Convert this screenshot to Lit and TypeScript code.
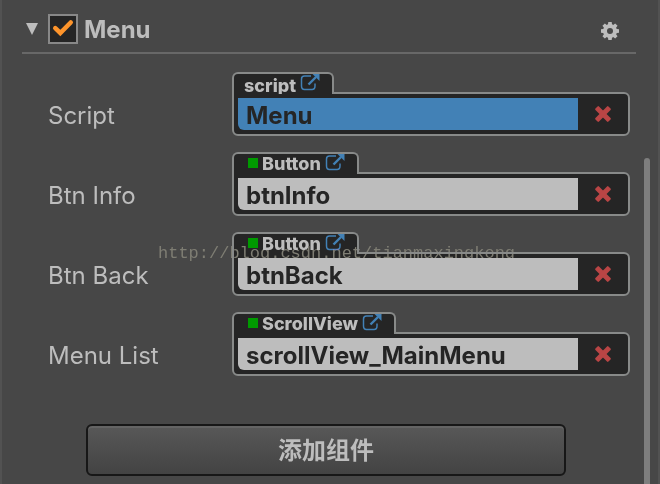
import { LitElement, html, css, svg, nothing } from "lit";
import { customElement, property, state } from "lit/decorators.js";
import { classMap } from "lit/directives/class-map.js";

interface Slot {
  id: string;
  label: string;
  type: string;
  value: string;
  isScript: boolean;
}

const SLOTS: Slot[] = [
  { id: "script", label: "Script", type: "script", value: "Menu", isScript: true },
  { id: "btn-info", label: "Btn Info", type: "Button", value: "btnInfo", isScript: false },
  { id: "btn-back", label: "Btn Back", type: "Button", value: "btnBack", isScript: false },
  { id: "menu-list", label: "Menu List", type: "ScrollView", value: "scrollView_MainMenu", isScript: false },
];

@customElement("node-slot")
export class NodeSlot extends LitElement {
  @property({ attribute: false }) slotData!: Slot;

  static styles = css`
    :host {
      display: block;
    }
    .row {
      display: grid;
      grid-template-columns: 184px minmax(0, 1fr);
      align-items: end;
    }
    .label {
      font-size: 24px;
      line-height: 40px;
      color: #bdbdbd;
    }
    .field {
      display: flex;
      flex-direction: column;
      align-items: flex-start;
    }
    .tab {
      position: relative;
      z-index: 1;
      box-sizing: border-box;
      height: 22px;
      margin-bottom: -2px;
      padding: 0 12px 0 14px;
      display: flex;
      align-items: flex-start;
      gap: 4px;
      overflow: hidden;
      background: #252525;
      border: 2px solid #888a89;
      border-bottom: 0;
      border-radius: 6px 6px 0 0;
      color: #bdbdbd;
      font-size: 18px;
      font-weight: 800;
      line-height: 20px;
      text-decoration: none;
    }
    .tab.script {
      padding-left: 10px;
    }
    .tab.script .type {
      line-height: 24px;
    }
    .dot {
      width: 10px;
      height: 10px;
      margin-top: 4px;
      background: #009a00;
    }
    .open {
      display: block;
      width: 20px;
      height: 18px;
    }
    .box {
      box-sizing: border-box;
      width: 100%;
      height: 44px;
      padding: 4px 0 4px 4px;
      display: flex;
      background: #252525;
      border: 2px solid #888a89;
      border-radius: 0 6px 6px 6px;
    }
    .value {
      flex: 1;
      min-width: 0;
      box-sizing: border-box;
      height: 32px;
      margin: 0;
      padding: 2px 8px 0;
      border: 0;
      outline: 0;
      border-radius: 0 0 0 6px;
      background: #bdbdbd;
      color: #252525;
      font: inherit;
      font-size: 24px;
      font-weight: 700;
    }
    .value.script {
      background: #4281b6;
    }
    .clear {
      width: 50px;
      padding: 0;
      border: 0;
      background: none;
      display: grid;
      place-items: center;
    }
    .cross {
      display: block;
      width: 18px;
      height: 18px;
    }
  `;

  render() {
    const s = this.slotData;
    return html`
      <div class="row">
        <label class="label" for=${s.id}>${s.label}</label>
        <div class="field">
          <a class=${classMap({ tab: true, script: s.isScript })} href="#${s.id}">
            ${s.isScript ? nothing : html`<span class="dot"></span>`}
            <span class="type">${s.type}</span>
            <svg class="open" viewBox="0 0 20 18" fill="none" stroke="#4281b6">
              <path d="M11 2H4.5Q1.5 2 1.5 5V12Q1.5 15.500 4.500 15.500H12Q15 15.500 15 12V9.500" stroke-width="1.500" />
              <path d="M8.500 10.500L16 3" stroke-width="2.400" />
              <path d="M12.500 0H19.500V7Z" fill="#4281b6" stroke="none" />
            </svg>
          </a>
          <div class="box">
            <input
              class=${classMap({ value: true, script: s.isScript })}
              id=${s.id}
              type="text"
              readonly
              .value=${s.value}
            />
            <button class="clear" type="button" aria-label="Clear ${s.label}">
              <svg class="cross" viewBox="0 0 18 18">
                <g fill="#b94545">
                  <rect x="-0.200" y="6.500" width="18.400" height="5" rx="1" transform="rotate(45 9 9)" />
                  <rect x="-0.200" y="6.500" width="18.400" height="5" rx="1" transform="rotate(-45 9 9)" />
                </g>
              </svg>
            </button>
          </div>
        </div>
      </div>
    `;
  }
}

@customElement("app-root")
export class AppRoot extends LitElement {
  @state() private enabled = true;

  static styles = css`
    :host {
      display: block;
      font-family: Inter, "Noto Sans CJK SC", sans-serif;
      color: #bdbdbd;
    }
    .panel {
      position: relative;
      box-sizing: border-box;
      min-height: 100vh;
      padding: 0 8px 0 20px;
      display: grid;
      grid-template-columns: minmax(0, 1fr) 6px;
      column-gap: 8px;
      background: #474747;
      border: solid #525252;
      border-width: 0 2px;
    }
    .header {
      height: 54px;
      box-sizing: border-box;
      padding: 6px 16px 0 4px;
      display: flex;
      align-items: center;
      border-bottom: 2px solid #686868;
    }
    .icon-button {
      padding: 0;
      border: 0;
      background: none;
      display: block;
    }
    .icon-button svg {
      display: block;
    }
    .fold {
      width: 12px;
      height: 12px;
      margin-right: 10px;
    }
    .toggle {
      display: flex;
      align-items: center;
      gap: 6px;
      font-size: 24px;
      font-weight: 700;
      line-height: 30px;
    }
    .name {
      padding-top: 2px;
    }
    .tick {
      display: grid;
    }
    .check,
    .mark {
      grid-area: 1 / 1;
    }
    .check {
      appearance: none;
      box-sizing: border-box;
      width: 30px;
      height: 30px;
      margin: 0;
      background: #252525;
      border: 2px solid #888888;
    }
    .mark {
      width: 30px;
      height: 30px;
      pointer-events: none;
    }
    .settings {
      margin-left: auto;
      padding-top: 4px;
    }
    .slots {
      padding: 18px 6px 0 26px;
      display: flex;
      flex-direction: column;
      gap: 16px;
    }
    .add {
      display: block;
      box-sizing: border-box;
      width: calc(100% - 134px);
      height: 52px;
      margin: 48px 70px 8px 64px;
      padding: 0 0 2px;
      border: 2px solid #171717;
      border-radius: 6px;
      background: linear-gradient(#585858, #434343);
      box-shadow: inset 0 2px 0 #646464;
      color: #bdbdbd;
      font-family: "Noto Sans CJK SC", sans-serif;
      font-size: 24px;
      font-weight: 700;
      line-height: 44px;
    }
    .scrollbar {
      margin-top: 158px;
      background: #7e7e7e;
      border-radius: 3px 3px 0 0;
    }
    .watermark {
      position: absolute;
      left: 156px;
      top: 243px;
      z-index: 2;
      font-family: "Liberation Mono", monospace;
      font-size: 17px;
      line-height: 22px;
      color: #7e7d73;
      mix-blend-mode: lighten;
      pointer-events: none;
    }
  `;

  private onToggle(e: Event) {
    this.enabled = (e.target as HTMLInputElement).checked;
  }

  render() {
    return html`
      <div class="panel">
        <main>
          <header class="header">
            <button class="icon-button fold" type="button" aria-label="Collapse">
              <svg width="12" height="12" viewBox="0 0 12 12"><path d="M0 0H12L6 12Z" fill="#bdbdbd" /></svg>
            </button>
            <label class="toggle">
              <span class="tick">
                <input class="check" type="checkbox" .checked=${this.enabled} @change=${this.onToggle} />
                ${this.enabled
                  ? html`<svg class="mark" viewBox="0 0 30 30">
                      <path d="M7.300 14.200L12.300 19L22.700 8.500" fill="none" stroke="#fd942b" stroke-width="4.600" stroke-linecap="round" stroke-linejoin="miter" />
                    </svg>`
                  : nothing}
              </span>
              <span class="name">Menu</span>
            </label>
            <button class="icon-button settings" type="button" aria-label="Settings">
              <svg width="20" height="20" viewBox="-10 -10 20 20">
                <circle r="5" fill="none" stroke="#bdbdbd" stroke-width="4" />
                <g fill="#bdbdbd">
                  ${[0, 45, 90, 135].map(
                    (a) => svg`<path d="M-2.200 -5L-1.700 -9H1.700L2.200 -5ZM-2.200 5L-1.700 9H1.700L2.200 5Z" transform="rotate(${a})" />`
                  )}
                </g>
              </svg>
            </button>
          </header>
          <section class="slots">
            ${SLOTS.map((s) => html`<node-slot .slotData=${s}></node-slot>`)}
          </section>
          <button class="add" type="button">添加组件</button>
        </main>
        <div class="scrollbar"></div>
        <div class="watermark">http://blog.csdn.net/tianmaxingkong</div>
      </div>
    `;
  }
}
